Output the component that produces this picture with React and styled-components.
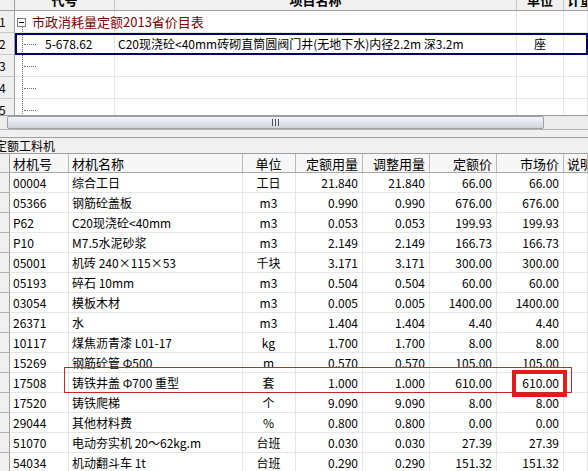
import React from "react";
import styled, { createGlobalStyle, css } from "styled-components";

const GlobalStyle = createGlobalStyle`
  html, body {
    margin: 0;
    padding: 0;
    background: #fff;
  }
  body {
    width: 588px;
    height: 471px;
    overflow: hidden;
    font-family: "Noto Sans CJK SC", "Liberation Sans", sans-serif;
    font-size: 12px;
    color: #000;
  }
`;

const TOP_COLS = "100px 402px 47px 24px";
const LOW_COLS = "10px 59px 174px 53px 67px 67px 67px 67px 24px";

const Screen = styled.div`
  width: 588px;
  height: 471px;
  overflow: hidden;
  display: flex;
  flex-direction: column;
`;

/* ---------- top grid (项目) ---------- */

const TopPanel = styled.div`
  height: 115px;
  flex-shrink: 0;
  overflow: hidden;
  display: flex;
  flex-direction: column;
`;

const TopHead = styled.div`
  display: flex;
  height: 11px;
  flex-shrink: 0;
  background: #f0f0f0;
  border-bottom: 1px solid #a0a0a0;
  box-sizing: border-box;
  overflow: hidden;
`;

const TopHeadCorner = styled.div`
  width: 15px;
  border-right: 1px solid #a0a0a0;
  box-sizing: border-box;
`;

const TopHeadCols = styled.div`
  flex: 1;
  display: grid;
  grid-template-columns: ${TOP_COLS};
`;

const TopHeadCell = styled.div`
  display: flex;
  align-items: flex-end;
  justify-content: ${({ $align }) => ($align === "left" ? "flex-start" : "center")};
  padding-left: ${({ $align }) => ($align === "left" ? "3px" : "0")};
  border-right: 1px solid #c4c4c4;
  overflow: hidden;
  font-size: 13px;
  font-weight: bold;
  line-height: 20px;
  white-space: nowrap;
`;

const TopRow = styled.div`
  display: flex;
  height: 22px;
  flex-shrink: 0;
`;

const RowNum = styled.div`
  width: 15px;
  flex-shrink: 0;
  box-sizing: border-box;
  background: #f0f0f0;
  border-right: 1px solid #a0a0a0;
  border-bottom: 1px solid #c8c8c8;
  display: flex;
  align-items: center;
  font-size: 12px;
  text-indent: -1px;
  overflow: hidden;
`;

const RowBody = styled.div`
  flex: 1;
  display: grid;
  grid-template-columns: ${TOP_COLS};
  position: relative;
  ${({ $selected }) =>
    $selected &&
    css`
      &::after {
        content: "";
        position: absolute;
        inset: 0;
        border: 2px solid #000066;
        pointer-events: none;
      }
    `}
`;

const TopCell = styled.div`
  box-sizing: border-box;
  border-right: 1px solid #e6e6e6;
  border-bottom: 1px solid #e6e6e6;
  display: flex;
  align-items: center;
  justify-content: ${({ $align }) => ($align === "center" ? "center" : "flex-start")};
  padding-left: ${({ $align }) => ($align === "center" ? "0" : "3px")};
  white-space: nowrap;
  overflow: hidden;
  position: relative;
`;

const TreeCell = styled(TopCell)`
  padding-left: 30px;
  overflow: ${({ $root }) => ($root ? "visible" : "hidden")};
  z-index: ${({ $root }) => ($root ? 1 : "auto")};

  &::before {
    content: "";
    position: absolute;
    left: 7px;
    top: ${({ $root }) => ($root ? "16px" : "0")};
    bottom: 0;
    border-left: 1px dotted #707070;
  }

  ${({ $root }) =>
    !$root &&
    css`
      &::after {
        content: "";
        position: absolute;
        left: 9px;
        width: 12px;
        top: 11px;
        border-top: 1px dotted #707070;
      }
    `}
`;

const Collapse = styled.span`
  position: absolute;
  left: 2px;
  top: 7px;
  width: 9px;
  height: 9px;
  box-sizing: border-box;
  border: 1px solid #808080;
  background: #fff;

  &::after {
    content: "";
    position: absolute;
    left: 1px;
    right: 1px;
    top: 3px;
    border-top: 1px solid #000;
  }
`;

const GroupTitle = styled.span`
  position: absolute;
  left: 17px;
  color: #800000;
  font-size: 13px;
  white-space: nowrap;
`;

/* ---------- scroll bar ---------- */

const HScroll = styled.div`
  height: 15px;
  flex-shrink: 0;
  box-sizing: border-box;
  display: flex;
  background: #ececec;
  border-top: 1px solid #9a9a9a;
  border-bottom: 1px solid #b4b4b4;
  padding-left: 7px;
`;

const Thumb = styled.div`
  width: 537px;
  box-sizing: border-box;
  border: 1px solid #9aa2ac;
  border-radius: 2px;
  background: linear-gradient(#f3f5f8, #e2e6eb 50%, #cfd5dc);
  display: flex;
  align-items: center;
  justify-content: center;
`;

const Gap = styled.div`
  height: 7px;
  flex-shrink: 0;
  background: #f0f0f0;
`;

const TabBar = styled.div`
  height: 17px;
  flex-shrink: 0;
  box-sizing: border-box;
  background: #f0f0f0;
  border-top: 1px solid #a0a0a0;
  border-bottom: 1px solid #a0a0a0;
  display: flex;
  align-items: center;
  text-indent: -5px;
  white-space: nowrap;
  overflow: hidden;
`;

/* ---------- lower grid (定额工料机) ---------- */

const LowerPanel = styled.div`
  flex: 1;
  position: relative;
  overflow: hidden;
`;

const LowRow = styled.div`
  display: grid;
  grid-template-columns: ${LOW_COLS};
  height: ${({ $head }) => ($head ? "19px" : "20px")};
  background: ${({ $head }) => ($head ? "#f7f7f7" : "#fff")};
`;

const Indicator = styled.div`
  box-sizing: border-box;
  background: #f0f0f0;
  border-right: 1px solid #a0a0a0;
  border-bottom: 1px solid #b0b0b0;
`;

const LowCell = styled.div`
  box-sizing: border-box;
  display: flex;
  align-items: center;
  justify-content: ${({ $align }) =>
    $align === "right" ? "flex-end" : $align === "center" ? "center" : "flex-start"};
  padding: 0 4px 0 3px;
  border-right: 1px solid ${({ $head }) => ($head ? "#b8b8b8" : "#e6e6e6")};
  border-bottom: 1px solid ${({ $head }) => ($head ? "#a8a8a8" : "#e6e6e6")};
  white-space: nowrap;
  overflow: hidden;
  font-size: ${({ $head }) => ($head ? "13px" : "12px")};
`;

const ThinMark = styled.div`
  position: absolute;
  top: 213px;
  left: 64px;
  width: 508px;
  height: 26px;
  box-sizing: border-box;
  border: 1px solid #c62828;
  pointer-events: none;
`;

const ThickMark = styled.div`
  position: absolute;
  top: 216px;
  left: 512px;
  width: 55px;
  height: 27px;
  box-sizing: border-box;
  border: 4px solid #e31b1b;
  pointer-events: none;
`;

const columns = [
  { key: "code", title: "材机号", align: "left" },
  { key: "name", title: "材机名称", align: "left" },
  { key: "unit", title: "单位", align: "center" },
  { key: "qty", title: "定额用量", align: "right" },
  { key: "adj", title: "调整用量", align: "right" },
  { key: "price", title: "定额价", align: "right" },
  { key: "market", title: "市场价", align: "right" },
  { key: "note", title: "说明", align: "left" },
];

const materials = [
  ["00004", "综合工日", "工日", "21.840", "21.840", "66.00", "66.00"],
  ["05366", "钢筋砼盖板", "m3", "0.990", "0.990", "676.00", "676.00"],
  ["P62", "C20现浇砼<40mm", "m3", "0.053", "0.053", "199.93", "199.93"],
  ["P10", "M7.5水泥砂浆", "m3", "2.149", "2.149", "166.73", "166.73"],
  ["05001", "机砖 240×115×53", "千块", "3.171", "3.171", "300.00", "300.00"],
  ["05193", "碎石 10mm", "m3", "0.504", "0.504", "60.00", "60.00"],
  ["03054", "模板木材", "m3", "0.005", "0.005", "1400.00", "1400.00"],
  ["26371", "水", "m3", "1.404", "1.404", "4.40", "4.40"],
  ["10117", "煤焦沥青漆 L01-17", "kg", "1.700", "1.700", "8.00", "8.00"],
  ["15269", "钢筋砼管 Φ500", "m", "0.570", "0.570", "105.00", "105.00"],
  ["17508", "铸铁井盖 Φ700 重型", "套", "1.000", "1.000", "610.00", "610.00"],
  ["17520", "铸铁爬梯", "个", "9.090", "9.090", "8.00", "8.00"],
  ["29044", "其他材料费", "%", "0.800", "0.800", "0.00", "0.00"],
  ["51070", "电动夯实机 20～62kg.m", "台班", "0.030", "0.030", "27.39", "27.39"],
  ["54034", "机动翻斗车 1t", "台班", "0.290", "0.290", "151.32", "151.32"],
];

function Grip() {
  return (
    <svg width="7" height="7" viewBox="0 0 7 7">
      <rect x="0" y="0" width="1" height="7" fill="#50565e" />
      <rect x="3" y="0" width="1" height="7" fill="#50565e" />
      <rect x="6" y="0" width="1" height="7" fill="#50565e" />
    </svg>
  );
}

function ProjectGrid() {
  return (
    <TopPanel>
      <TopHead>
        <TopHeadCorner />
        <TopHeadCols>
          <TopHeadCell>代号</TopHeadCell>
          <TopHeadCell>项目名称</TopHeadCell>
          <TopHeadCell>单位</TopHeadCell>
          <TopHeadCell $align="left">计量</TopHeadCell>
        </TopHeadCols>
      </TopHead>

      <TopRow>
        <RowNum>1</RowNum>
        <RowBody>
          <TreeCell $root>
            <Collapse />
            <GroupTitle>市政消耗量定额2013省价目表</GroupTitle>
          </TreeCell>
          <TopCell />
          <TopCell />
          <TopCell />
        </RowBody>
      </TopRow>

      <TopRow>
        <RowNum>2</RowNum>
        <RowBody $selected>
          <TreeCell>5-678.62</TreeCell>
          <TopCell>C20现浇砼&lt;40mm砖砌直筒圆阀门井(无地下水)内径2.2m 深3.2m</TopCell>
          <TopCell $align="center">座</TopCell>
          <TopCell />
        </RowBody>
      </TopRow>

      {[3, 4, 5].map((n) => (
        <TopRow key={n}>
          <RowNum>{n}</RowNum>
          <RowBody>
            <TreeCell />
            <TopCell />
            <TopCell />
            <TopCell />
          </RowBody>
        </TopRow>
      ))}
    </TopPanel>
  );
}

function MaterialGrid() {
  return (
    <LowerPanel>
      <LowRow $head>
        <Indicator />
        {columns.map((c) => (
          <LowCell key={c.key} $head $align={c.align}>
            {c.title}
          </LowCell>
        ))}
      </LowRow>
      {materials.map((row) => (
        <LowRow key={row[0]}>
          <Indicator />
          {columns.map((c, i) => (
            <LowCell key={c.key} $align={c.align}>
              {row[i] || ""}
            </LowCell>
          ))}
        </LowRow>
      ))}
      <ThinMark />
      <ThickMark />
    </LowerPanel>
  );
}

export default function App() {
  return (
    <>
      <GlobalStyle />
      <Screen>
        <ProjectGrid />
        <HScroll>
          <Thumb>
            <Grip />
          </Thumb>
        </HScroll>
        <Gap />
        <TabBar>定额工料机</TabBar>
        <MaterialGrid />
      </Screen>
    </>
  );
}
